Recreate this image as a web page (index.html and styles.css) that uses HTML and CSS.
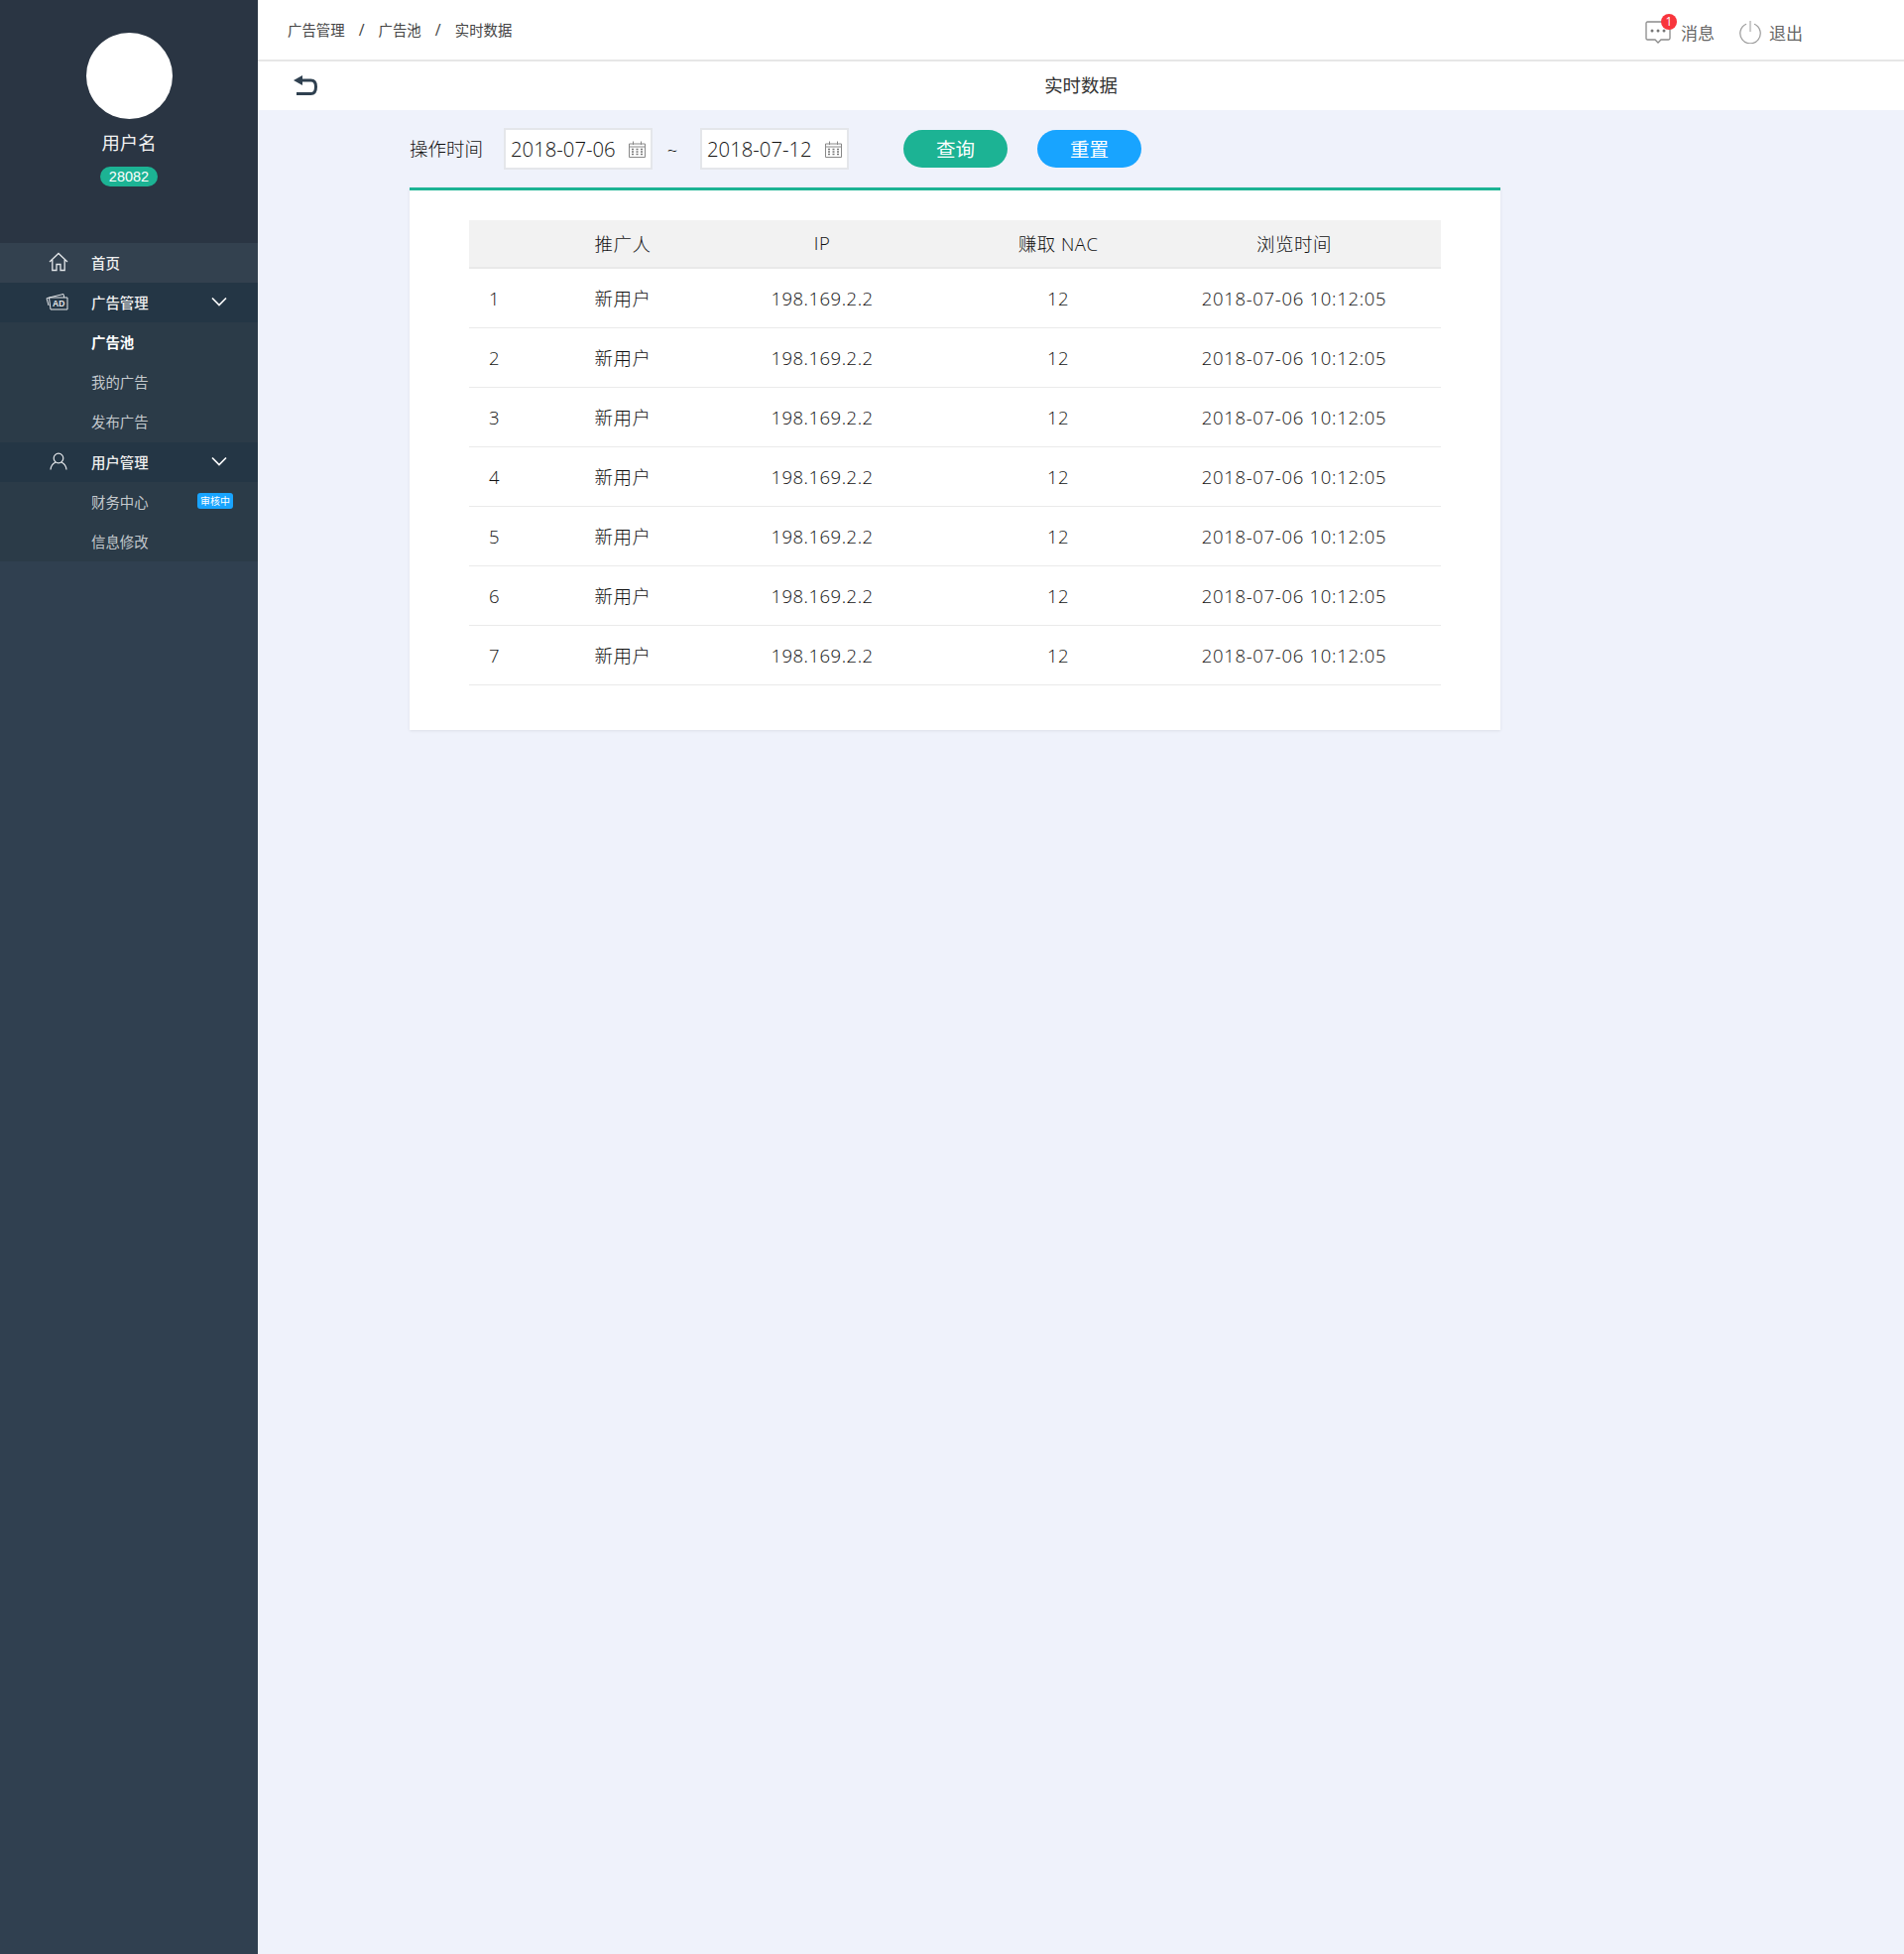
FILE: index.html
```html
<!DOCTYPE html>
<html lang="zh-CN">
<head>
  <meta charset="UTF-8">
  <title>实时数据</title>
  <link rel="stylesheet" href="styles.css">
</head>
<body>
  <div class="layout">
    <!-- Sidebar -->
    <aside class="sidebar">
      <div class="profile">
        <div class="avatar"></div>
        <div class="username">用户名</div>
        <span class="coin-badge">28082</span>
      </div>
      <nav class="menu">
        <a class="menu-item home">
          <span class="menu-icon">
            <svg width="20" height="20" viewBox="0 0 20 20" fill="none" stroke="#e4e7ea" stroke-width="1.3"><path d="M1 10 10 1.5 19 10M3.8 8V18.5H8V12.5H12V18.5H16.2V8"/></svg>
          </span>
          <span>首页</span>
        </a>
        <a class="menu-item group">
          <span class="menu-icon">
            <svg width="24" height="18" viewBox="0 0 24 18" fill="none" stroke="#e4e7ea" stroke-width="1"><path d="M6 17H23V5H4.500L6 17ZM4.500 5 19 1.500 19.800 5M4.500 5 2 5.800 4 13"/><text x="8" y="14.300" class="ad-text">AD</text></svg>
          </span>
          <span>广告管理</span>
          <svg class="chevron" width="16" height="10" viewBox="0 0 16 10" fill="none" stroke="#fff" stroke-width="1.700"><path d="M1 1.500 8 8.500 15 1.500"/></svg>
        </a>
        <a class="menu-sub active">广告池</a>
        <a class="menu-sub">我的广告</a>
        <a class="menu-sub wide">发布广告</a>
        <a class="menu-item group">
          <span class="menu-icon">
            <svg class="user-icon" width="18" height="18" viewBox="0 0 18 18" fill="none" stroke="#e4e7ea" stroke-width="1.200"><circle cx="9" cy="6" r="4.800"/><path d="M1 17.500C1.500 13 4 11 6 10.300M17 17.500C16.500 13 14 11 12 10.300"/></svg>
          </span>
          <span>用户管理</span>
          <svg class="chevron" width="16" height="10" viewBox="0 0 16 10" fill="none" stroke="#fff" stroke-width="1.700"><path d="M1 1.500 8 8.500 15 1.500"/></svg>
        </a>
        <a class="menu-sub">财务中心<span class="status-tag">审核中</span></a>
        <a class="menu-sub">信息修改</a>
      </nav>
    </aside>

    <div class="main">
      <!-- Top bar -->
      <header class="topbar">
        <div class="breadcrumb">
          <span>广告管理</span><i>/</i><span>广告池</span><i>/</i><span>实时数据</span>
        </div>
        <div class="top-actions">
          <a class="top-link">
            <span class="msg-icon">
              <svg width="26" height="24" viewBox="0 0 26 24" fill="none" stroke="#8a8a8a" stroke-width="1.300"><path d="M2.500 1H23.500Q25 1 25 2.500V17.500Q25 19 23.500 19H16L13 22 10 19H2.500Q1 19 1 17.500V2.500Q1 1 2.500 1Z"/><circle cx="7" cy="10" r="1.500" fill="#777" stroke="none"/><circle cx="13" cy="10" r="1.500" fill="#777" stroke="none"/><circle cx="19" cy="10" r="1.500" fill="#777" stroke="none"/></svg>
              <span class="msg-count">1</span>
            </span>
            消息
          </a>
          <a class="top-link">
            <svg width="22" height="23" viewBox="0 0 22 23" fill="none" stroke="#999" stroke-width="1.200"><path d="M7 3.200A10.200 10.200 0 1 0 15 3.200"/><path d="M11 0V11" stroke="#bbb" stroke-width="1.500"/></svg>
            退出
          </a>
        </div>
      </header>

      <div class="subheader">
        <a class="back-btn">
          <svg width="24" height="20" viewBox="0 0 24 20" fill="none"><path d="M0 5 9 0V10Z" fill="#2f4050"/><path d="M7 5H17.500C21 5 22.500 7.500 22.500 11.500S21 18.500 17.500 18.500H3" stroke="#2f4050" stroke-width="3"/></svg>
        </a>
        <h1>实时数据</h1>
      </div>

      <div class="content">
        <!-- Filter -->
        <div class="filter">
          <label>操作时间</label>
          <div class="date-input">2018-07-06
            <svg width="17" height="17" viewBox="0 0 17 17" fill="none" stroke="#888"><path d="M.5 3H16.500V16.500H.5ZM.5 6H16.500M4.500 .5V4M12.500 .5V4"/><path d="M3 8.500H5M7.500 8.500H9.500M12 8.500H14M3 11H5M7.500 11H9.500M12 11H14M3 13.500H5M7.500 13.500H9.500M12 13.500H14" stroke="#777" stroke-width="1.500"/></svg>
          </div>
          <span class="tilde">~</span>
          <div class="date-input">2018-07-12
            <svg width="17" height="17" viewBox="0 0 17 17" fill="none" stroke="#888"><path d="M.5 3H16.500V16.500H.5ZM.5 6H16.500M4.500 .5V4M12.500 .5V4"/><path d="M3 8.500H5M7.500 8.500H9.500M12 8.500H14M3 11H5M7.500 11H9.500M12 11H14M3 13.500H5M7.500 13.500H9.500M12 13.500H14" stroke="#777" stroke-width="1.500"/></svg>
          </div>
          <button class="btn btn-search">查询</button>
          <button class="btn btn-reset">重置</button>
        </div>

        <!-- Table card -->
        <div class="card">
          <table class="data-table">
            <colgroup>
              <col class="col-no"><col class="col-user"><col class="col-ip"><col class="col-nac"><col class="col-time">
            </colgroup>
            <thead>
              <tr><th></th><th>推广人</th><th>IP</th><th>赚取 NAC</th><th>浏览时间</th></tr>
            </thead>
            <tbody>
              <tr><td>1</td><td>新用户</td><td>198.169.2.2</td><td>12</td><td class="time">2018-07-06 10:12:05</td></tr>
              <tr><td>2</td><td>新用户</td><td>198.169.2.2</td><td>12</td><td class="time">2018-07-06 10:12:05</td></tr>
              <tr><td>3</td><td>新用户</td><td>198.169.2.2</td><td>12</td><td class="time">2018-07-06 10:12:05</td></tr>
              <tr><td>4</td><td>新用户</td><td>198.169.2.2</td><td>12</td><td class="time">2018-07-06 10:12:05</td></tr>
              <tr><td>5</td><td>新用户</td><td>198.169.2.2</td><td>12</td><td class="time">2018-07-06 10:12:05</td></tr>
              <tr><td>6</td><td>新用户</td><td>198.169.2.2</td><td>12</td><td class="time">2018-07-06 10:12:05</td></tr>
              <tr><td>7</td><td>新用户</td><td>198.169.2.2</td><td>12</td><td class="time">2018-07-06 10:12:05</td></tr>
            </tbody>
          </table>
        </div>
      </div>
    </div>
  </div>
</body>
</html>
```

FILE: styles.css
```css
:root {
  --teal: #1cb394;
  --blue: #18a4ff;
  --page: #eff2fb;
  --text: #111;
}

* {
  margin: 0;
  padding: 0;
  box-sizing: border-box;
}

body {
  font-family: "Open Sans", "Noto Sans CJK SC", sans-serif;
  background: var(--page);
  color: var(--text);
}

.layout {
  display: flex;
  min-height: 1970px;
}

/* Sidebar */
.sidebar {
  width: 260px;
  flex-shrink: 0;
  background: #304050;
}

.profile {
  height: 245px;
  background: #2a3543;
  padding-top: 33px;
  display: flex;
  flex-direction: column;
  align-items: center;
}

.avatar {
  width: 87px;
  height: 87px;
  border-radius: 50%;
  background: #fff;
}

.username {
  margin-top: 11px;
  font-size: 18.4px;
  line-height: 26px;
  color: #f2f2f2;
}

.coin-badge {
  margin-top: 11px;
  width: 58px;
  height: 20px;
  border-radius: 10px;
  background: var(--teal);
  color: #fff;
  font-family: "Liberation Sans", sans-serif;
  font-size: 14.5px;
  line-height: 20px;
  text-align: center;
}

.menu {
  font-size: 14.4px;
}

.menu a {
  display: flex;
  align-items: center;
  height: 40px;
  padding-bottom: 2px;
}

.menu a.wide {
  height: 41px;
}

.menu-item {
  color: #f0f0f0;
  font-weight: 500;
}

.menu-item.home {
  background: #33414f;
}

.menu-item.group {
  background: #243645;
}

.menu-icon {
  width: 92px;
  display: flex;
  justify-content: flex-end;
  padding-right: 23px;
}

.user-icon {
  margin-right: 1px;
}

.ad-text {
  font-family: "Liberation Sans", sans-serif;
  font-size: 8.500px;
  font-weight: 700;
  fill: #e4e7ea;
  stroke: none;
}

.chevron {
  margin-left: auto;
  margin-right: 31px;
}

.menu-sub {
  background: #2b3b48;
  color: #c4c9cd;
  padding-left: 92px;
  padding-right: 25px;
}

.menu-sub.active {
  color: #fff;
  font-weight: 700;
}

.status-tag {
  margin-left: auto;
  width: 36px;
  height: 16px;
  border-radius: 3px;
  background: var(--blue);
  color: #fff;
  font-size: 10px;
  line-height: 16px;
  text-align: center;
}

/* Main area */
.main {
  flex: 1;
  min-width: 0;
}

.topbar {
  height: 62px;
  background: #fff;
  border-bottom: 2px solid #e6e6e6;
  display: flex;
  align-items: center;
  justify-content: space-between;
  padding: 0 102px 0 30px;
}

.breadcrumb {
  display: flex;
  align-items: center;
  font-size: 14.4px;
  color: #444;
  margin-top: -2px;
}

.breadcrumb i {
  font-style: normal;
  font-size: 16px;
  width: 34px;
  padding-top: 2px;
  text-align: center;
}

.top-actions {
  display: flex;
  align-items: center;
  gap: 25px;
  margin-top: 4px;
}

.top-link {
  display: flex;
  align-items: center;
  gap: 8px;
  font-size: 17px;
  color: #666;
}

.msg-icon {
  position: relative;
  display: flex;
  margin-right: 2px;
  top: 1px;
}

.msg-count {
  position: absolute;
  top: -7px;
  right: -6px;
  width: 16px;
  height: 16px;
  border-radius: 50%;
  background: #f8353c;
  color: #fff;
  font-size: 12px;
  line-height: 16px;
  text-align: center;
}

.subheader {
  height: 49px;
  background: #fff;
  position: relative;
  display: flex;
  align-items: center;
  justify-content: center;
  padding-bottom: 4px;
}

.subheader h1 {
  font-size: 18.4px;
  font-weight: 400;
  color: #333;
}

.back-btn {
  position: absolute;
  left: 36px;
  top: 14px;
  display: flex;
}

.content {
  padding: 18px 0 0 153px;
}

/* Filter */
.filter {
  display: flex;
  align-items: center;
  height: 42px;
  font-size: 18.5px;
  font-weight: 300;
  color: #111;
}

.filter label {
  width: 95px;
  padding-bottom: 2px;
}

.date-input {
  width: 150px;
  height: 42px;
  background: #fff;
  border: 2px solid #e4e6ea;
  display: flex;
  align-items: center;
  justify-content: space-between;
  padding: 0 5px;
  font-size: 20.3px;
}

.tilde {
  width: 48px;
  text-align: center;
  padding-right: 8px;
}

.btn {
  width: 105px;
  height: 38px;
  border: none;
  border-radius: 19px;
  color: #fff;
  font-family: inherit;
  font-size: 19.500px;
  line-height: 36px;
  padding-top: 1px;
}

.btn-search {
  background: var(--teal);
  margin-left: 55px;
}

.btn-reset {
  background: var(--blue);
  margin-left: 30px;
}

/* Table card */
.card {
  width: 1100px;
  height: 547px;
  margin-top: 18px;
  background: #fff;
  border-top: 3px solid var(--teal);
  box-shadow: 0 1px 3px rgba(0, 0, 0, 0.08);
  padding: 30px 60px 0;
}

.data-table {
  width: 980px;
  table-layout: fixed;
  border-collapse: collapse;
  font-size: 18.5px;
  font-weight: 300;
  letter-spacing: 0.5px;
}

.col-no { width: 102px; }
.col-user { width: 106px; }
.col-ip { width: 296px; }
.col-nac { width: 180px; }
.col-time { width: 296px; }

.data-table th {
  height: 48px;
  background: #f2f2f2;
  font-weight: 300;
  border-bottom: 2px solid #e9e9e9;
  padding-bottom: 2px;
}

.data-table td {
  height: 60px;
  text-align: center;
  border-bottom: 1px solid #eaeaea;
}

.data-table td:first-child {
  text-align: left;
  padding-left: 20px;
}

.data-table td.time {
  letter-spacing: 0.7px;
}
```
